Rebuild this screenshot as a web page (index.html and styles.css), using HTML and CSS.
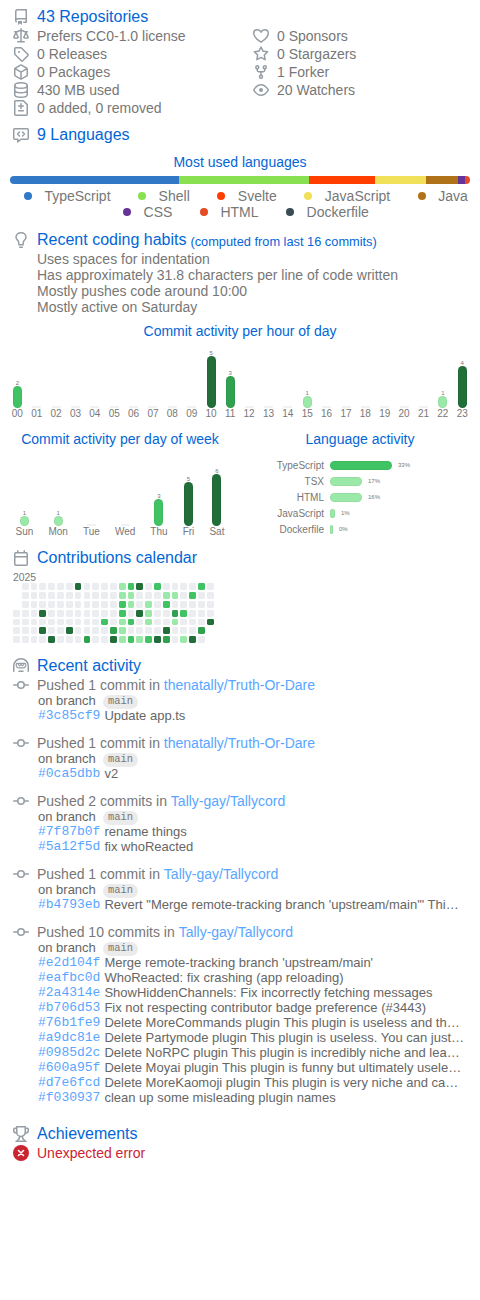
FILE: index.html
```html
<!DOCTYPE html>
<html lang="en">
<head>
<meta charset="utf-8">
<title>Repositories metrics</title>
<link rel="stylesheet" href="styles.css">
</head>
<body>
<main class="metrics">
  <section class="repositories">
    <h2 class="heading"><svg class="icon" viewBox="0 0 16 16"><path d="M2 2.5A2.5 2.5 0 014.5 0h8.75a.75.75 0 01.75.75v12.5a.75.75 0 01-.75.75h-2.5a.75.75 0 110-1.5h1.75v-2h-8a1 1 0 00-.714 1.7.75.75 0 01-1.072 1.05A2.495 2.495 0 012 11.5v-9zm10.5-1V9h-8c-.356 0-.694.074-1 .208V2.5a1 1 0 011-1h8zM5 12.25v3.25a.25.25 0 00.4.2l1.45-1.087a.25.25 0 01.3 0L8.6 15.7a.25.25 0 00.4-.2v-3.25a.25.25 0 00-.25-.25h-3.5a.25.25 0 00-.25.25z"/></svg>43 Repositories</h2>
    <div class="columns">
      <div class="column">
        <div class="field"><svg class="icon" viewBox="0 0 16 16"><path d="M8.75.75a.75.75 0 00-1.5 0V2h-.984c-.305 0-.604.08-.869.23l-1.288.737A.25.25 0 013.984 3H1.75a.75.75 0 000 1.5h.428L.066 9.192a.75.75 0 00.154.838l.53-.53-.53.53.073.068a3.514 3.514 0 00.686.45A4.492 4.492 0 003 11c.88 0 1.556-.22 2.023-.454a3.515 3.515 0 00.686-.45l.071-.066L5.25 9.5l.53.53a.75.75 0 00.154-.838L3.822 4.5h.162c.305 0 .604-.08.869-.23l1.289-.737a.25.25 0 01.124-.033h.984V13h-2.5a.75.75 0 000 1.5h6.5a.75.75 0 000-1.5h-2.5V3.5h.984a.25.25 0 01.124.033l1.29.736c.264.152.563.231.868.231h.162l-2.112 4.692a.75.75 0 00.154.838l.53-.53-.53.53.073.068a3.517 3.517 0 00.686.45A4.492 4.492 0 0013 11c.88 0 1.556-.22 2.023-.454a3.512 3.512 0 00.686-.45l.071-.066-.53-.53.53.53a.75.75 0 00.154-.838L13.823 4.5h.427a.75.75 0 000-1.5h-2.234a.25.25 0 01-.124-.033l-1.29-.736A1.75 1.75 0 009.735 2H8.75V.75zM1.695 9.227c.285.135.718.273 1.305.273s1.02-.138 1.305-.273L3 6.327l-1.305 2.9zm10 0c.285.135.718.273 1.305.273s1.02-.138 1.305-.273L13 6.327l-1.305 2.9z"/></svg>Prefers CC0-1.0 license</div>
        <div class="field"><svg class="icon" viewBox="0 0 16 16"><path d="M2.5 7.775V2.75a.25.25 0 01.25-.25h5.025a.25.25 0 01.177.073l6.25 6.25a.25.25 0 010 .354l-5.025 5.025a.25.25 0 01-.354 0l-6.25-6.25a.25.25 0 01-.073-.177zm-1.5 0V2.75C1 1.784 1.784 1 2.75 1h5.025c.464 0 .91.184 1.238.513l6.25 6.25a1.75 1.75 0 010 2.474l-5.026 5.026a1.75 1.75 0 01-2.474 0l-6.25-6.25A1.75 1.75 0 011 7.775zM6 5a1 1 0 100 2 1 1 0 000-2z"/></svg>0 Releases</div>
        <div class="field"><svg class="icon" viewBox="0 0 16 16"><path d="M8.878.392a1.75 1.75 0 00-1.756 0l-5.25 3.045A1.75 1.75 0 001 4.951v6.098c0 .624.332 1.2.872 1.514l5.25 3.045a1.75 1.75 0 001.756 0l5.25-3.045c.54-.313.872-.89.872-1.514V4.951c0-.624-.332-1.2-.872-1.514L8.878.392zM7.875 1.69a.25.25 0 01.25 0l4.63 2.685L8 7.133 3.245 4.375l4.63-2.685zM2.5 5.677v5.372c0 .09.047.171.125.216l4.625 2.683V8.432L2.5 5.677zm6.25 8.271l4.625-2.683a.25.25 0 00.125-.216V5.677L8.75 8.432v5.516z"/></svg>0 Packages</div>
        <div class="field"><svg class="icon line" viewBox="0 0 16 16"><ellipse cx="8" cy="3.5" rx="6.25" ry="2.75"/><path d="M1.75 3.5v9c0 1.5 2.8 2.75 6.25 2.75s6.25-1.25 6.25-2.75v-9M1.75 8c0 1.5 2.8 2.75 6.25 2.75S14.25 9.5 14.25 8"/></svg>430 MB used</div>
        <div class="field"><svg class="icon line" viewBox="0 0 16 16"><path d="M2.75.75h7.6l3.9 3.9v9.6a1 1 0 01-1 1H2.75a1 1 0 01-1-1V1.75a1 1 0 011-1zM8 3.8v4.7M5.7 6.1h4.6M5.7 10.75h4.6"/></svg>0 added, 0 removed</div>
      </div>
      <div class="column">
        <div class="field"><svg class="icon line" viewBox="0 0 16 16"><path d="M8 14.2C5.5 12.7.75 9.3.75 5.3.75 3 2.4 1.75 4.25 1.75 5.8 1.75 7.2 2.6 8 4.3c.8-1.7 2.2-2.55 3.75-2.55 1.85 0 3.5 1.25 3.5 3.55 0 4-4.75 7.4-7.25 8.9z"/></svg>0 Sponsors</div>
        <div class="field"><svg class="icon" viewBox="0 0 16 16"><path d="M8 .25a.75.75 0 01.673.418l1.882 3.815 4.21.612a.75.75 0 01.416 1.279l-3.046 2.97.719 4.192a.75.75 0 01-1.088.791L8 12.347l-3.766 1.98a.75.75 0 01-1.088-.79l.72-4.194L.818 6.374a.75.75 0 01.416-1.28l4.21-.611L7.327.668A.75.75 0 018 .25zm0 2.445L6.615 5.5a.75.75 0 01-.564.41l-3.097.45 2.24 2.184a.75.75 0 01.216.664l-.528 3.084 2.769-1.456a.75.75 0 01.698 0l2.77 1.456-.53-3.084a.75.75 0 01.216-.664l2.24-2.183-3.096-.45a.75.75 0 01-.564-.41L8 2.694v.001z"/></svg>0 Stargazers</div>
        <div class="field"><svg class="icon line" viewBox="0 0 16 16"><circle cx="4.25" cy="3.25" r="1.5"/><circle cx="11.75" cy="3.25" r="1.5"/><circle cx="8" cy="12.75" r="1.5"/><path d="M4.25 4.75v1.5a1.5 1.5 0 001.5 1.5h4.5a1.5 1.5 0 001.5-1.5v-1.5M8 7.75v3.5"/></svg>1 Forker</div>
        <div class="field"><svg class="icon line" viewBox="0 0 16 16"><path d="M.9 7.6C2 5.9 4.4 2.75 8 2.75s6 3.15 7.1 4.85q.25.4 0 .8C14 10.1 11.6 13.25 8 13.25S2 10.1.9 8.4q-.25-.4 0-.8z"/><circle class="solid" cx="8" cy="8" r="2"/></svg>20 Watchers</div>
      </div>
    </div>
  </section>

  <section class="languages">
    <h2 class="heading"><svg class="icon line" viewBox="0 0 16 16"><path d="M1.75 1.75h12.5a1 1 0 011 1v8.5a1 1 0 01-1 1H8l-3.25 2.6v-2.6h-3a1 1 0 01-1-1v-8.5a1 1 0 011-1zM6.5 5L4.5 7l2 2M9.5 5l2 2-2 2"/></svg>9 Languages</h2>
    <h3 class="title">Most used languages</h3>
    <div class="bar">
      <i class="typescript" style="width:168.5px"></i><i class="shell" style="width:130.7px"></i><i class="svelte" style="width:66.3px"></i><i class="javascript" style="width:50.3px"></i><i class="java" style="width:31.9px"></i><i class="css" style="width:7.8px"></i><i class="html" style="width:4.5px"></i>
    </div>
    <div class="legend">
      <div class="legend-row first"><span><i class="typescript"></i>TypeScript</span><span><i class="shell"></i>Shell</span><span><i class="svelte"></i>Svelte</span><span><i class="javascript"></i>JavaScript</span><span><i class="java"></i>Java</span></div>
      <div class="legend-row"><span><i class="css"></i>CSS</span><span><i class="html"></i>HTML</span><span><i class="dockerfile"></i>Dockerfile</span></div>
    </div>
  </section>

  <section class="habits">
    <h2 class="heading"><svg class="icon line" viewBox="0 0 16 16"><path d="M5.75 11.5v-.8c0-1.1-.5-1.7-1.1-2.4C4 7.6 3 6.8 3 5.3 3 2.7 5.1.75 8 .75s5 1.95 5 4.55c0 1.5-1 2.3-1.65 3-.6.7-1.1 1.3-1.1 2.4v.8M5.75 12.75h4.5M6.75 15.25h2.5"/></svg>Recent coding habits <small>(computed from last 16 commits)</small></h2>
    <ul class="facts">
      <li>Uses spaces for indentation</li>
      <li>Has approximately 31.8 characters per line of code written</li>
      <li>Mostly pushes code around 10:00</li>
      <li>Mostly active on Saturday</li>
    </ul>
    <h3 class="title">Commit activity per hour of day</h3>
    <div class="chart hours" id="hours"></div>
    <div class="halves">
      <div class="half">
        <h3 class="title">Commit activity per day of week</h3>
        <div class="chart days" id="days"></div>
      </div>
      <div class="half">
        <h3 class="title">Language activity</h3>
        <div class="usage">
          <div><span>TypeScript</span><i class="l2" style="width:62px"></i><b>33%</b></div>
          <div><span>TSX</span><i class="l1" style="width:32px"></i><b>17%</b></div>
          <div><span>HTML</span><i class="l1" style="width:32px"></i><b>16%</b></div>
          <div><span>JavaScript</span><i class="l1" style="width:5px"></i><b>1%</b></div>
          <div><span>Dockerfile</span><i class="l1" style="width:3px"></i><b>0%</b></div>
        </div>
      </div>
    </div>
  </section>

  <section class="contributions">
    <h2 class="heading"><svg class="icon line" viewBox="0 0 16 16"><path d="M2.75 2.75h10.5a1 1 0 011 1v10.5a1 1 0 01-1 1H2.75a1 1 0 01-1-1V3.75a1 1 0 011-1zM1.75 6.75h12.5M4.75.75v2M11.25.75v2"/></svg>Contributions calendar</h2>
    <div class="year">2025</div>
    <div class="calendar" id="calendar"></div>
  </section>

  <section class="activity">
    <h2 class="heading"><svg class="icon line" viewBox="0 0 16 16"><path d="M.75 13.25V8a7.25 7.25 0 0114.5 0v5.25M6 13.25h4"/><path class="thin" d="M4.2 5.4h7.6a1 1 0 011 1c0 2.4-1.3 3.4-2.6 3.4H5.8c-1.3 0-2.6-1-2.6-3.4a1 1 0 011-1zM5.2 6.4l1.4 1.4L8 6.4l1.4 1.4 1.4-1.4"/></svg>Recent activity</h2>
    <div id="events"></div>
  </section>

  <section class="achievements">
    <h2 class="heading"><svg class="icon line" viewBox="0 0 16 16"><path d="M3.75.75h8.5v5.5a4.25 4.25 0 01-8.5 0zM3.75 2.25h-2a1 1 0 00-1 1V4.5a2.5 2.5 0 002.5 2.5h.7M12.25 2.25h2a1 1 0 011 1V4.5a2.5 2.5 0 01-2.5 2.5h-.7M6.7 10.3c0 2-.4 2.6-1.5 3.2-.6.4-.9.9-.9 1.7M9.3 10.3c0 2 .4 2.6 1.5 3.2.6.4.9.9.9 1.7M3 15.25h10"/></svg>Achievements</h2>
    <div class="field error"><svg class="icon" viewBox="0 0 16 16"><circle cx="8" cy="8" r="8"/><path class="cross" d="M5.5 5.5l5 5M10.5 5.5l-5 5"/></svg>Unexpected error</div>
  </section>
</main>
<script src="main.js"></script>
</body>
</html>
```

FILE: styles.css
```css
* { box-sizing: border-box; }
body {
  margin: 0;
  background: #fff;
  color: #777;
  font: 14px/16px "Liberation Sans", Arial, sans-serif;
}
.metrics { width: 480px; padding-top: 6px; }
h2, h3, ul { margin: 0; padding: 0; font-weight: normal; list-style: none; }
i, b { font-style: normal; font-weight: normal; }

.icon {
  flex: none;
  width: 16px;
  height: 16px;
  margin: 0 8px 0 13px;
  fill: #959da5;
  fill-rule: evenodd;
}
.line { fill: none; stroke: #959da5; stroke-width: 1.5; stroke-linecap: round; stroke-linejoin: round; }
.line .solid { fill: #959da5; stroke: none; }
.line .thin { stroke-width: 1.2; }

.heading {
  display: flex;
  align-items: flex-start;
  height: 21px;
  color: #0366d6;
  font-size: 16px;
  line-height: 21px;
}
.heading .icon { margin-top: 3px; }
.heading small { margin: 2px 0 0 4px; font-size: 12.8px; }
.title { height: 16px; color: #0366d6; font-size: 14px; text-align: center; }

.columns { display: flex; }
.column { width: 240px; }
.field { display: flex; align-items: center; height: 18px; }

.languages { margin-top: 7px; }
.languages .title { margin-top: 9px; }
.bar { display: flex; width: 460px; height: 8px; margin: 6px 0 4px 10px; border-radius: 4px; overflow: hidden; }
.legend-row { display: flex; justify-content: center; gap: 27.7px; padding-right: 5px; white-space: nowrap; }
.legend-row.first { justify-content: flex-start; padding-left: 24px; }
.legend-row:not(.first) { padding-left: 17px; }
.legend-row span { display: flex; align-items: center; }
.legend-row i { width: 8px; height: 8px; margin-right: 12.4px; border-radius: 50%; }
.typescript { background: #3178c6; }
.shell { background: #89e051; }
.svelte { background: #ff3e00; }
.javascript { background: #f1e05a; }
.java { background: #b07219; }
.css { background: #663399; }
.html { background: #e34c26; }
.dockerfile { background: #384d54; }

.habits { margin-top: 9px; }
.facts { margin: 1px 0 8px 37px; }

.l0, .l1, .l2, .l3, .l4 { box-shadow: inset 0 0 0 1px rgba(27, 31, 35, .06); }
.l0 { background: #ebedf0; }
.l1 { background: #9be9a8; }
.l2 { background: #40c463; }
.l3 { background: #30a14e; }
.l4 { background: #216e39; }

.chart { display: flex; align-items: flex-end; }
.chart > div { display: flex; flex-direction: column; align-items: center; }
.chart b { font-size: 6px; line-height: 6px; }
.chart i { width: 9px; border-radius: 5px; }
.chart span { font-size: 10px; line-height: 11px; }
.hours { justify-content: space-between; height: 80px; padding: 0 12.2px 0 11.8px; }
.days { justify-content: space-around; height: 90px; padding: 0 8px; }
.chart .l0 { border-radius: 1px; opacity: .8; box-shadow: none; }

.halves { display: flex; margin-top: 12px; }
.half { width: 240px; }
.usage { margin-top: 10px; font-size: 10px; }
.usage div { display: flex; align-items: center; gap: 6px; height: 16px; }
.usage span { width: 84px; padding-top: 1px; text-align: right; }
.usage i { height: 9px; border-radius: 5px; }
.usage b { font-size: 6px; line-height: 8px; }

.contributions { margin-top: 10px; }
.year { margin: 5px 0 0 13px; font-size: 10.4px; line-height: 10px; }
.calendar {
  display: grid;
  grid-template: repeat(7, 6.8px) / repeat(23, 6.8px);
  gap: 2.03px;
  margin: .3px 0 0 13px;
}
.calendar i { border-radius: 1.4px; box-shadow: none; }

.activity { margin-top: 11.7px; }
.event { margin-bottom: 11px; }
.event .field a { color: #58a6ff; margin-left: 3.9px; }
.details { margin-top: -1px; padding-left: 38px; color: #666; font-size: 13px; line-height: 15px; white-space: nowrap; }
.details div { display: flex; height: 15px; }
.details code {
  margin-right: 4px;
  color: #58a6ff;
  font: 13px/15px "Liberation Mono", monospace;
}
.branch span {
  height: 14px;
  margin: 2px 0 0 7px;
  padding: 0 5.2px;
  border-radius: 7px;
  background: #ebebeb;
  color: #777;
  font: 10.4px/13px "Liberation Mono", monospace;
}
.achievements { margin-top: 18px; }
.error { color: #cb2431; }
.error .icon { fill: #cb2431; }
.cross { fill: none; stroke: #fff; stroke-width: 1.6; stroke-linecap: round; }
```

FILE: main.js
```js
const column = (label, value, height, level) =>
  `<div><b>${value || ""}</b><i class="l${level}" style="height:${height}px"></i><span>${label}</span></div>`;

// hour: [commits, intensity]
const hours = { 0: [2, 2], 10: [5, 4], 11: [3, 3], 15: [1, 1], 22: [1, 1], 23: [4, 4] };
document.getElementById("hours").innerHTML = Array.from({ length: 24 }, (_, h) => {
  const [n, level] = hours[h] || [0, 0];
  return column(String(h).padStart(2, "0"), n, 2 + n * 10, level);
}).join("");

document.getElementById("days").innerHTML = [
  ["Sun", 1, 10, 1], ["Mon", 1, 10, 1], ["Tue", 0, 2, 0], ["Wed", 0, 2, 0],
  ["Thu", 3, 27, 2], ["Fri", 5, 44, 4], ["Sat", 6, 52, 4]
].map(d => column(...d)).join("");

// One entry per weekday, mapping week index to intensity
const days = [
  { 7: 4, 12: 1, 13: 2, 14: 4, 16: 2, 21: 2 },
  { 12: 1, 13: 1, 17: 1, 18: 1, 20: 2 },
  { 12: 2, 13: 1, 15: 1, 17: 2 },
  { 3: 4, 12: 2, 14: 4, 15: 1, 18: 3, 19: 2 },
  { 10: 2, 12: 1, 13: 2, 15: 1, 18: 1, 22: 4 },
  { 3: 4, 6: 4, 11: 3, 12: 1, 17: 4, 21: 3 },
  { 4: 4, 8: 3, 11: 4, 12: 1, 13: 2, 14: 1, 15: 2, 16: 4, 17: 3, 19: 1, 20: 4 }
];
document.getElementById("calendar").innerHTML = days.map((row, d) =>
  Array.from({ length: 23 }, (_, w) => {
    const outside = (w === 0 && d < 3) || (w === 22 && d > 4);
    return outside ? "<i></i>" : `<i class="l${row[w] || 0}"></i>`;
  }).join("")).join("");

const events = [
  ["1 commit", "thenatally/Truth-Or-Dare", [["3c85cf9", "Update app.ts"]]],
  ["1 commit", "thenatally/Truth-Or-Dare", [["0ca5dbb", "v2"]]],
  ["2 commits", "Tally-gay/Tallycord", [["7f87b0f", "rename things"], ["5a12f5d", "fix whoReacted"]]],
  ["1 commit", "Tally-gay/Tallycord", [["b4793eb", "Revert \"Merge remote-tracking branch 'upstream/main'\" Thi…"]]],
  ["10 commits", "Tally-gay/Tallycord", [
    ["e2d104f", "Merge remote-tracking branch 'upstream/main'"],
    ["eafbc0d", "WhoReacted: fix crashing (app reloading)"],
    ["2a4314e", "ShowHiddenChannels: Fix incorrectly fetching messages"],
    ["b706d53", "Fix not respecting contributor badge preference (#3443)"],
    ["76b1fe9", "Delete MoreCommands plugin This plugin is useless and th…"],
    ["a9dc81e", "Delete Partymode plugin This plugin is useless. You can just…"],
    ["0985d2c", "Delete NoRPC plugin This plugin is incredibly niche and lea…"],
    ["600a95f", "Delete Moyai plugin This plugin is funny but ultimately usele…"],
    ["d7e6fcd", "Delete MoreKaomoji plugin This plugin is very niche and ca…"],
    ["f030937", "clean up some misleading plugin names"]
  ]]
];
const commitIcon = '<svg class="icon line" viewBox="0 0 16 16"><circle cx="8" cy="8" r="3.25"/><path d="M.75 8h4M11.25 8h4"/></svg>';
document.getElementById("events").innerHTML = events.map(([count, repo, commits]) =>
  `<div class="event"><div class="field">${commitIcon}Pushed ${count} in <a>${repo}</a></div>
  <div class="details"><div class="branch">on branch<span>main</span></div>${
    commits.map(([sha, text]) => `<div><code>#${sha}</code>${text}</div>`).join("")
  }</div></div>`).join("");
```
